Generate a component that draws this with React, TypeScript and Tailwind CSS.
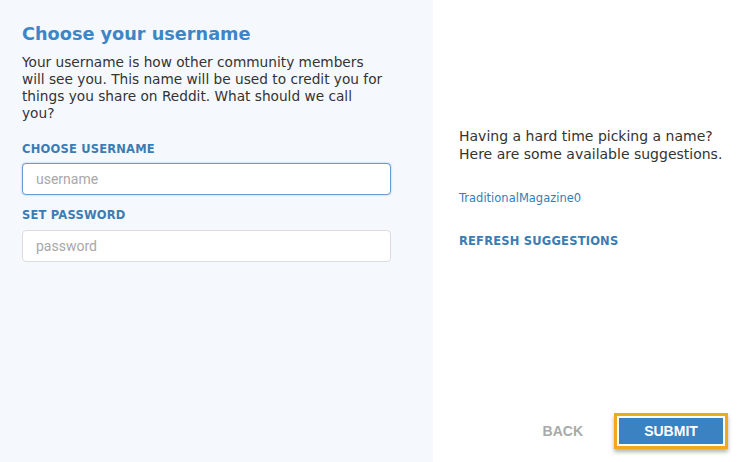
import React from 'react';

const verdana = { fontFamily: '"DejaVu Sans", Verdana, sans-serif' };

export default function App() {
  return (
    <div className="flex h-[462px] w-[744px] overflow-hidden bg-white" style={verdana}>
      {/* left: form */}
      <div className="w-[433px] shrink-0 bg-[#f5f9fd] pl-[22px] pt-[22px]">
        <div className="w-[369px]">
          <h1 className="text-[17.7px] font-bold leading-[24px] text-[#3c86c7]">Choose your username</h1>
          <p className="mt-[8px] w-[400px] text-[13.7px] leading-[17px] text-[#333]">
            Your username is how other community members
            <br />
            will see you. This name will be used to credit you for
            <br />
            things you share on Reddit. What should we call
            <br />
            you?
          </p>

          <label className="mt-[20px] block text-[11.5px] font-bold leading-[14px] tracking-[0.2px] text-[#3b7cb3]">
            CHOOSE USERNAME
          </label>
          <input
            placeholder="username"
            className="mt-[7px] block h-[32px] w-full rounded-[4px] border border-[#6b9ad2] bg-white px-[13px] text-[14px] text-[#333] shadow-[0_0_2px_rgba(70,130,200,0.5)] outline-none placeholder:text-[#a8a8a8]"
            style={{ fontFamily: 'Roboto, "Liberation Sans", sans-serif' }}
          />

          <label className="mt-[13px] block text-[11.5px] font-bold leading-[14px] tracking-[0.2px] text-[#3b7cb3]">
            SET PASSWORD
          </label>
          <input
            placeholder="password"
            className="mt-[8px] block h-[32px] w-full rounded-[4px] border border-[#dcdcdc] bg-white px-[13px] text-[14px] text-[#333] outline-none placeholder:text-[#a8a8a8]"
            style={{ fontFamily: 'Roboto, "Liberation Sans", sans-serif' }}
          />
        </div>
      </div>

      {/* right: suggestions */}
      <div className="flex flex-1 flex-col pl-[26px] pr-[16px] pt-[127px]">
        <p className="text-[14px] leading-[18px] text-[#333]">
          Having a hard time picking a name? Here are some available suggestions.
        </p>
        <button className="mt-[28px] self-start text-[11.5px] leading-[14px] text-[#3b7cb3]">TraditionalMagazine0</button>
        <button className="mt-[29px] self-start text-[11.5px] font-bold leading-[14px] tracking-[0.2px] text-[#3b7cb3]">
          REFRESH SUGGESTIONS
        </button>

        <div className="mt-auto mb-[13px] flex items-center justify-end gap-[31px]" style={{ fontFamily: '"Liberation Sans", Arial, sans-serif' }}>
          <button className="text-[14px] font-bold text-[#a9a9a9]">BACK</button>
          <div className="border-[3px] border-[#f0a81c] p-[2px] shadow-[0_3px_4px_rgba(0,0,0,0.3)]">
            <button className="flex h-[26px] w-[104px] items-center justify-center bg-[#3a82c2] text-[14px] font-bold text-white">
              SUBMIT
            </button>
          </div>
        </div>
      </div>
    </div>
  );
}
